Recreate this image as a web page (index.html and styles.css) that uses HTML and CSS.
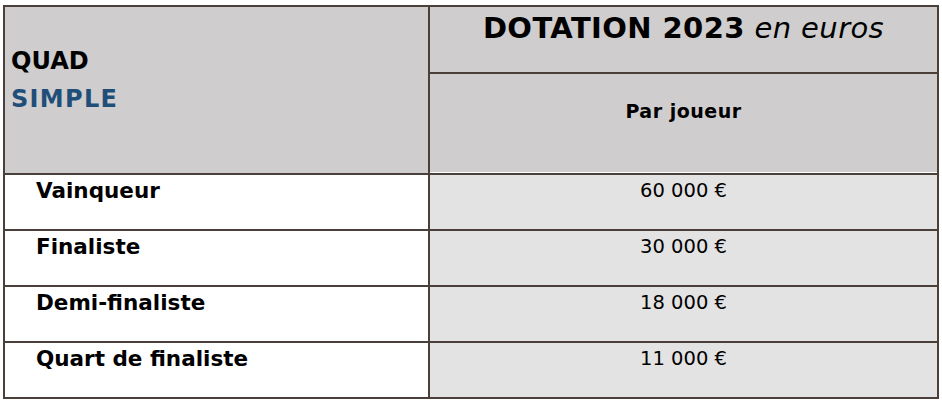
FILE: index.html
```html
<!DOCTYPE html>
<html lang="fr">
<head>
<meta charset="utf-8">
<title>Dotation 2023 - Quad simple</title>
<link rel="stylesheet" href="styles.css">
</head>
<body>
<div class="grid">
  <div class="cell head-left">
    <div class="quad">QUAD</div>
    <div class="simple">SIMPLE</div>
  </div>
  <div class="cell head-title"><span class="b">DOTATION 2023</span> <span class="i">en euros</span></div>
  <div class="cell head-sub">Par joueur</div>

  <div class="cell label">Vainqueur</div>
  <div class="cell value">60 000 €</div>
  <div class="cell label">Finaliste</div>
  <div class="cell value">30 000 €</div>
  <div class="cell label">Demi-finaliste</div>
  <div class="cell value">18 000 €</div>
  <div class="cell label">Quart de finaliste</div>
  <div class="cell value">11 000 €</div>
</div>
</body>
</html>
```

FILE: styles.css
```css
html, body {
  margin: 0;
  padding: 0;
  background: #ffffff;
}
body {
  padding: 5px 0 0 3px;
  font-family: "DejaVu Sans", Verdana, sans-serif;
  color: #000;
}
.grid {
  display: grid;
  grid-template-columns: 423px 507px;
  grid-template-rows: 65px 99px 54px 54px 54px 54px;
  gap: 2px;
  padding: 2px;
  width: 932px;
  background: #4b3f3a;
}
.cell {
  box-sizing: border-box;
}
.head-left {
  grid-row: 1 / span 2;
  background: #cfcdcd;
  padding: 35px 0 0 6px;
  font-weight: bold;
  font-size: 24px;
  line-height: 38px;
}
.simple {
  color: #1f4e79;
  letter-spacing: 1.3px;
}
.head-title {
  background: #cfcdcd;
  text-align: center;
  font-size: 29px;
  line-height: 32px;
  padding-top: 5px;
  letter-spacing: 0.4px;
}
.head-title .b {
  font-weight: bold;
}
.head-title .i {
  font-style: italic;
}
.head-sub {
  background: #cfcdcd;
  border-bottom: 1px solid #ffffff;
  text-align: center;
  font-weight: bold;
  font-size: 19px;
  line-height: 22px;
  padding-top: 26px;
  letter-spacing: 0.5px;
}
.label {
  background: #ffffff;
  font-weight: bold;
  font-size: 21.5px;
  line-height: 26px;
  padding: 3px 0 0 31px;
}
.value {
  background: #e4e3e3;
  text-align: center;
  font-size: 19.5px;
  line-height: 26px;
  padding-top: 3px;
}
```
